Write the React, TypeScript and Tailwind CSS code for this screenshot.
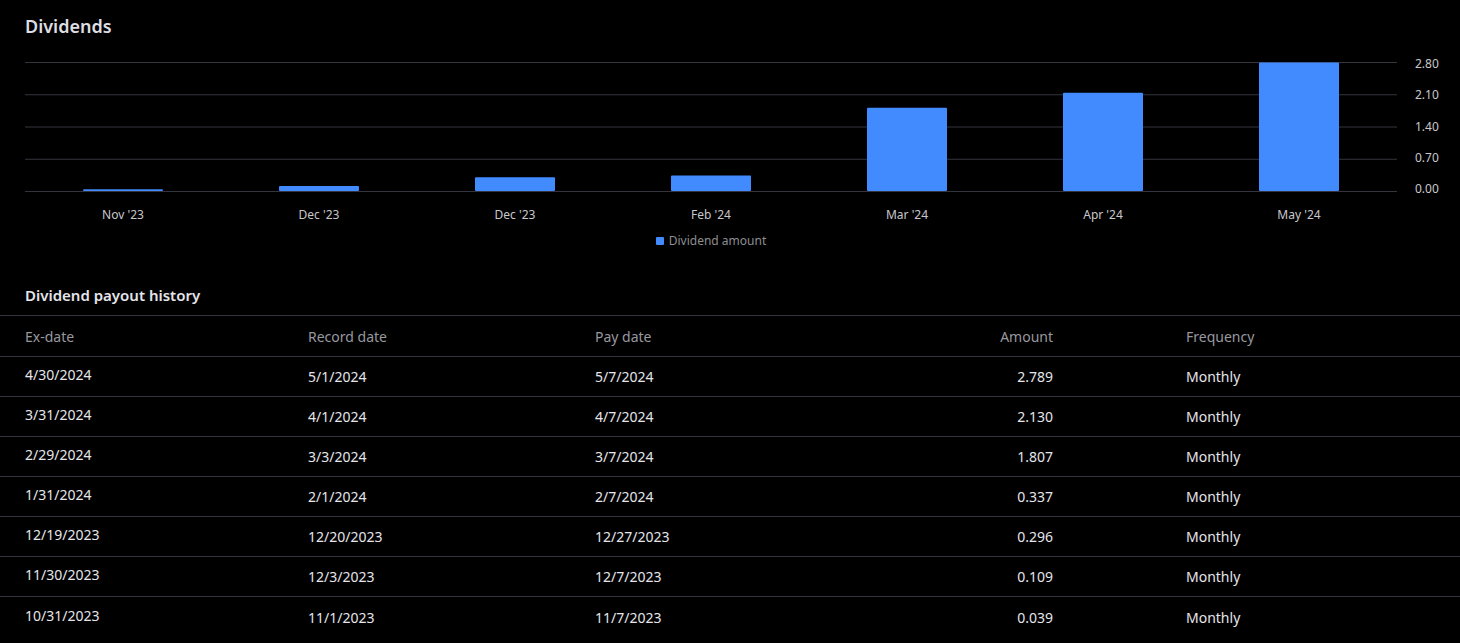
const bars = [
  { label: "Nov '23", value: 0.039 },
  { label: "Dec '23", value: 0.109 },
  { label: "Dec '23", value: 0.296 },
  { label: "Feb '24", value: 0.337 },
  { label: "Mar '24", value: 1.807 },
  { label: "Apr '24", value: 2.13 },
  { label: "May '24", value: 2.789 },
];

const rows = [
  ["4/30/2024", "5/1/2024", "5/7/2024", "2.789"],
  ["3/31/2024", "4/1/2024", "4/7/2024", "2.130"],
  ["2/29/2024", "3/3/2024", "3/7/2024", "1.807"],
  ["1/31/2024", "2/1/2024", "2/7/2024", "0.337"],
  ["12/19/2023", "12/20/2023", "12/27/2023", "0.296"],
  ["11/30/2023", "12/3/2023", "12/7/2023", "0.109"],
  ["10/31/2023", "11/1/2023", "11/7/2023", "0.039"],
];

const ticks = ["2.80", "2.10", "1.40", "0.70", "0.00"];

function Chart() {
  const W = 1372;
  const H = 129;
  const step = W / bars.length;
  return (
    <div className="pl-[25px]">
      <div className="flex">
        <svg width={W} height={H + 1} className="block mt-[62px]">
          {[0, 1, 2, 3, 4].map((i) => (
            <line key={i} x1={0} x2={W} y1={i * (H / 4) + 0.5} y2={i * (H / 4) + 0.5} stroke="#34343f" />
          ))}
          {bars.map((b, i) => {
            const h = (b.value / 2.8) * H;
            return <rect key={i} x={i * step + 58} y={H - h} width={80} height={h} fill="#428bff" rx={1} />;
          })}
        </svg>
        <div className="ml-[18px] mt-[55px] flex flex-col justify-between h-[143px] text-[12px] text-[#c7c7cc]">
          {ticks.map((t) => (
            <span key={t}>{t}</span>
          ))}
        </div>
      </div>
      <div className="flex w-[1372px] text-[12px] text-[#c7c7cc] mt-[8px]">
        {bars.map((b, i) => (
          <div key={i} className="flex-1 text-center">{b.label}</div>
        ))}
      </div>
      <div className="flex w-[1372px] justify-center items-center gap-[5px] mt-[8px] text-[12px] text-[#8e8e93]">
        <span className="w-[8px] h-[8px] bg-[#428bff] rounded-[1px]" />
        Dividend amount
      </div>
    </div>
  );
}

export default function App() {
  const cols = "grid grid-cols-[283px_287px_360px_98px_1fr] items-center";
  return (
    <div className="bg-black min-h-[643px] w-[1460px] text-[#e5e5ea] font-['Inter',sans-serif]">
      <h1 className="pl-[25px] pt-[14px] text-[18px] font-semibold text-[#dedee3] leading-[24px]">Dividends</h1>
      <div className="-mt-[38px]">
        <Chart />
      </div>
      <h2 className="pl-[25px] mt-[35px] text-[15px] font-semibold text-[#e5e5ea] leading-[20px]">Dividend payout history</h2>
      <div className="mt-[10px] border-t border-[#34343f]">
        <div className={`${cols} h-[41px] pl-[25px] text-[14px] text-[#98989f] border-b border-[#34343f]`}>
          <span>Ex-date</span>
          <span>Record date</span>
          <span>Pay date</span>
          <span className="text-right">Amount</span>
          <span className="pl-[133px]">Frequency</span>
        </div>
        {rows.map((r, i) => (
          <div
            key={i}
            className={`${cols} h-[40px] pl-[25px] text-[14px] text-[#e5e5ea] ${i < rows.length - 1 ? "border-b border-[#34343f]" : ""}`}
          >
            <span className="-mt-[4px]">{r[0]}</span>
            <span>{r[1]}</span>
            <span>{r[2]}</span>
            <span className="text-right">{r[3]}</span>
            <span className="pl-[133px]">Monthly</span>
          </div>
        ))}
      </div>
    </div>
  );
}
